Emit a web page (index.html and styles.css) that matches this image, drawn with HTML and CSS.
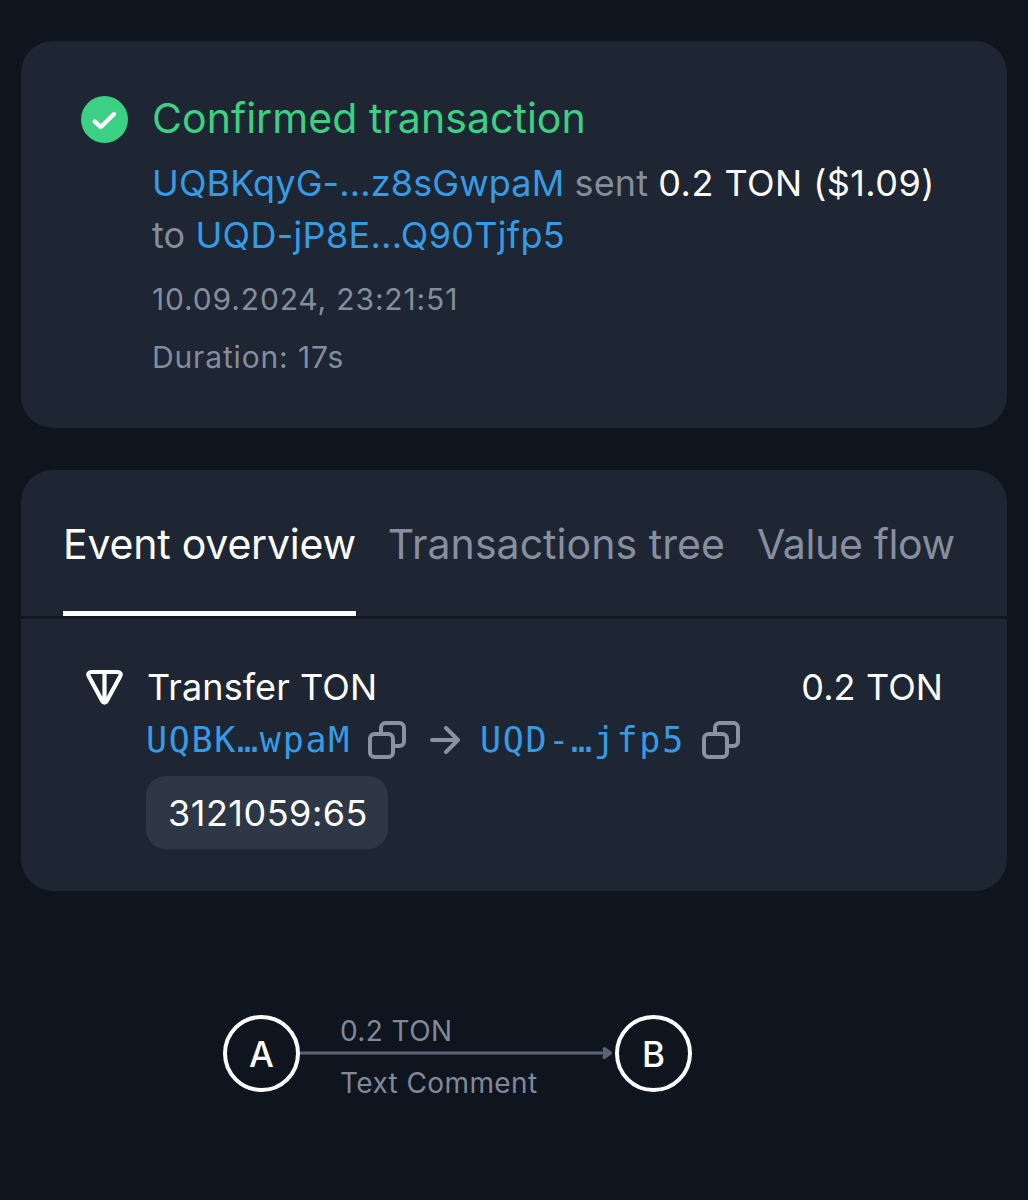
FILE: index.html
```html
<!DOCTYPE html>
<html lang="en">
<head>
<meta charset="UTF-8" />
<meta name="viewport" content="width=device-width, initial-scale=1" />
<title>Transaction</title>
<link rel="stylesheet" href="styles.css">
</head>
<body>

<section class="card summary">
  <svg class="status-icon" viewBox="0 0 47 47">
    <circle cx="23.5" cy="23.5" r="23.5" fill="#3bd083" />
    <path d="M13.700 25.500L19.800 31L33 18" fill="none" stroke="#fff" stroke-width="4.4" stroke-linecap="round" stroke-linejoin="round" />
  </svg>
  <div class="summary-body">
    <h1>Confirmed transaction</h1>
    <p class="description">
      <a class="address">UQBKqyG-...z8sGwpaM</a> <span class="muted">sent</span> <span class="amount">0.2 TON ($1.09)</span><br>
      <span class="muted">to</span> <a class="address to">UQD-jP8E...Q90Tjfp5</a>
    </p>
    <p class="meta date">10.09.2024, 23:21:51</p>
    <p class="meta duration">Duration: 17s</p>
  </div>
</section>

<section class="card details">
  <nav class="tabs">
    <div class="tab active">Event overview</div>
    <div class="tab tree">Transactions tree</div>
    <div class="tab flow">Value flow</div>
  </nav>
  <div class="event">
    <svg class="ton-icon" viewBox="0 0 38 38">
      <path d="M6 4H33C35.400 4 36.400 6.200 35.200 8.200L22 32.500C20.800 35.200 18.200 35.200 17 32.500L3.800 8.200C2.600 6.200 3.600 4 6 4ZM19.500 4V33" fill="none" stroke="#fff" stroke-width="4.200" stroke-linejoin="round" />
    </svg>
    <div class="event-body">
      <div class="event-head">
        <span class="event-name">Transfer TON</span>
        <span class="event-value">0.2 TON</span>
      </div>
      <div class="route">
        <a class="mono">UQBK…wpaM</a>
        <svg class="copy-icon" viewBox="0 0 38 38">
          <rect x="2" y="13" width="23" height="23" rx="4.5" />
          <path d="M13 13V6.500a4.500 4.500 0 0 1 4.500-4.500H31.500a4.500 4.500 0 0 1 4.500 4.500V20.500a4.500 4.500 0 0 1-4.500 4.500H25" />
        </svg>
        <svg class="arrow-icon" viewBox="0 0 30 28">
          <path d="M2 14H28M16 2L28 14L16 26" />
        </svg>
        <a class="mono">UQD-…jfp5</a>
        <svg class="copy-icon" viewBox="0 0 38 38">
          <rect x="2" y="13" width="23" height="23" rx="4.5" />
          <path d="M13 13V6.500a4.500 4.500 0 0 1 4.500-4.500H31.500a4.500 4.500 0 0 1 4.500 4.500V20.500a4.500 4.500 0 0 1-4.500 4.500H25" />
        </svg>
      </div>
      <div class="comment">3121059:65</div>
    </div>
  </div>
</section>

<div class="graph">
  <div class="node">A</div>
  <div class="edge">
    <div class="edge-label value">0.2 TON</div>
    <svg class="edge-line" viewBox="0 0 315 14">
      <path d="M0 7H308" stroke="#5b6474" stroke-width="3" />
      <path d="M304.500 3L310 7L304.500 11L306 7Z" fill="#5b6474" stroke="#5b6474" stroke-width="4" stroke-linejoin="round" />
    </svg>
    <div class="edge-label text">Text Comment</div>
  </div>
  <div class="node">B</div>
</div>

</body>
</html>
```
FILE: styles.css
```css
* {
  box-sizing: border-box;
}
body {
  margin: 0;
  padding: 41px 21px 0;
  min-height: 1200px;
  background: #0f151e;
  color: #fff;
  font-family: Inter, "Liberation Sans", sans-serif;
  font-size: 36px;
}
h1, p {
  margin: 0;
  font-weight: 400;
}
.card {
  background: #1d2632;
  border-radius: 32px;
}

.summary {
  display: flex;
  height: 387px;
  padding: 51px 60px 0;
}
.status-icon {
  width: 47px;
  height: 47px;
  margin: 4px 24px 0 0;
  flex: none;
}
.summary-body {
  white-space: nowrap;
}
h1 {
  font-size: 41px;
  line-height: 52px;
  letter-spacing: 0.05px;
  color: #3bd083;
}
.description {
  margin-top: 13px;
  line-height: 52px;
  letter-spacing: 0.12px;
}
.amount {
  letter-spacing: 0.45px;
}
.address,
.mono {
  color: #369be5;
}
.address.to {
  letter-spacing: 0.3px;
}
.muted {
  color: #838d9b;
}
.meta {
  color: #848d9c;
  font-size: 30px;
  line-height: 40px;
  letter-spacing: 0.85px;
}
.date {
  margin-top: 18px;
}
.duration {
  margin-top: 18px;
}

.details {
  height: 421px;
  margin-top: 42px;
}
.tabs {
  display: flex;
  height: 149px;
  padding: 0 42px;
  border-bottom: 3px solid #111821;
  gap: 32px;
  white-space: nowrap;
}
.tab {
  height: 146px;
  padding-top: 48px;
  font-size: 41px;
  line-height: 52px;
  color: #878f9f;
}
.tab.tree {
  letter-spacing: 0.05px;
}
.tab.flow {
  letter-spacing: -0.35px;
}
.tab.active {
  letter-spacing: -0.2px;
  color: #fff;
  border-bottom: 5px solid #fff;
}
.event {
  display: flex;
  padding: 42px 64px 0 64px;
}
.ton-icon {
  width: 38px;
  height: 38px;
  margin: 7px 23px 0 0;
  flex: none;
}
.event-body {
  flex: 1;
}
.event-head {
  display: flex;
  justify-content: space-between;
  padding-left: 1px;
  line-height: 52px;
  letter-spacing: 0.1px;
}
.route {
  display: flex;
  align-items: center;
  height: 54px;
}
.mono {
  font-family: "DejaVu Sans Mono", "Liberation Mono", monospace;
  font-size: 35px;
  letter-spacing: 1.7px;
}
.copy-icon {
  width: 38px;
  height: 38px;
  margin-left: 17px;
}
.arrow-icon {
  width: 30px;
  height: 28px;
  margin: 0 20px 0 24px;
}
.copy-icon,
.arrow-icon {
  fill: none;
  stroke: #8a92a2;
  stroke-width: 4;
  stroke-linecap: round;
  stroke-linejoin: round;
}
.comment {
  display: inline-block;
  width: 242px;
  height: 73px;
  margin-top: 9px;
  padding-left: 22px;
  border-radius: 20px;
  background: #2e3745;
  line-height: 74px;
  letter-spacing: 0.5px;
}

.graph {
  display: flex;
  align-items: center;
  margin: 117px 0 0 202px;
}
.node {
  width: 77px;
  height: 77px;
  border: 4px solid #fff;
  border-radius: 50%;
  font-size: 35px;
  font-weight: 500;
  line-height: 70px;
  text-align: center;
}
.edge {
  width: 315px;
}
.edge-line {
  display: block;
  width: 315px;
  height: 14px;
}
.edge-label {
  height: 38px;
  padding-left: 40px;
  color: #808998;
  font-size: 28px;
  line-height: 34px;
  letter-spacing: 0.4px;
}
.edge-label.value {
  padding-top: 6px;
}
.edge-label.text {
  padding-top: 6px;
}
```
